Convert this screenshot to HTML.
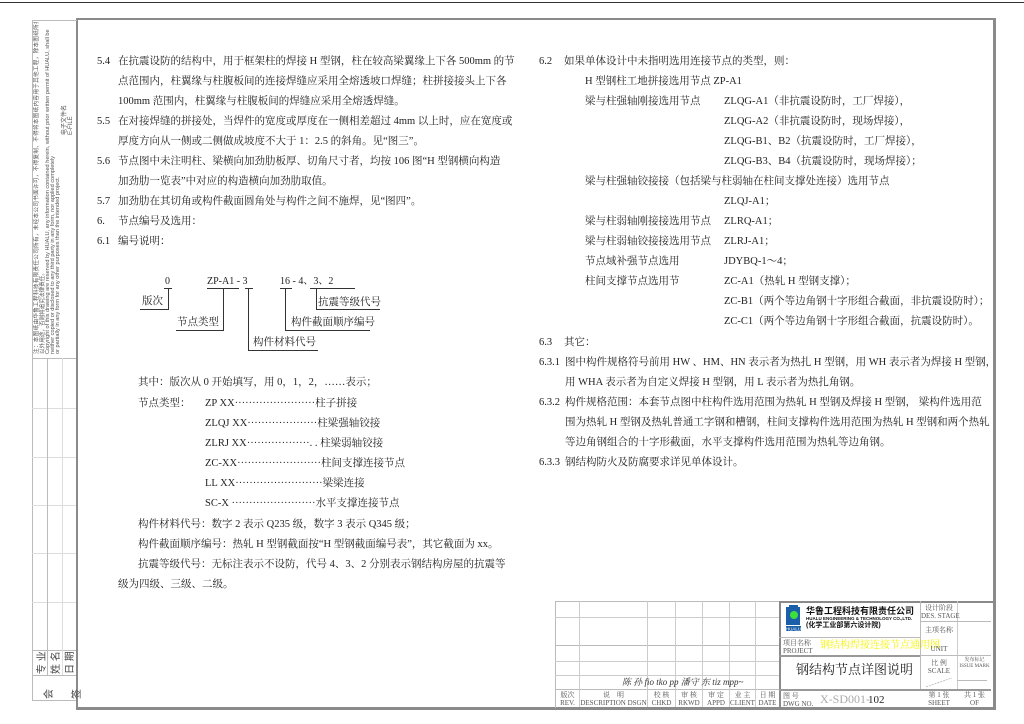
<!DOCTYPE html>
<html><head><meta charset="utf-8">
<style>
body{margin:0;width:1024px;height:724px;background:#fff;position:relative;overflow:hidden;font-family:"Liberation Serif","Noto Serif CJK SC","Noto Sans CJK SC",serif;color:#222}
.t{position:absolute;font-size:10.5px;line-height:12px;white-space:nowrap}
.l{position:absolute;background:#bbb}
.k{position:absolute;background:#333}
.s{position:absolute;font-size:7px;line-height:8px;white-space:nowrap;color:#555;text-align:center}
.r{position:absolute;transform-origin:0 0;transform:rotate(-90deg);font-size:5.6px;line-height:5.4px;white-space:nowrap;color:#555;font-family:"Liberation Sans","Noto Sans CJK SC",sans-serif}
</style></head><body>
<div class="k" style="left:0;top:2px;width:1024px;height:1px"></div>
<div style="position:absolute;left:76px;top:18px;width:915px;height:687px;border:2px solid #8a8a8a;border-right-width:3px;border-bottom-width:3px"></div>
<div style="position:absolute;left:32px;top:20px;width:44px;height:680px;border-left:1px solid #bbb;border-top:1px solid #bbb"></div>
<div class="l" style="left:32px;top:358px;width:44px;height:1px"></div>
<div class="l" style="left:32px;top:408px;width:44px;height:1px;background:#ddd"></div>
<div class="l" style="left:32px;top:457px;width:44px;height:1px;background:#ddd"></div>
<div class="l" style="left:32px;top:505px;width:44px;height:1px;background:#ddd"></div>
<div class="l" style="left:32px;top:553px;width:44px;height:1px;background:#ddd"></div>
<div class="l" style="left:32px;top:602px;width:44px;height:1px;background:#ddd"></div>
<div class="l" style="left:32px;top:650px;width:44px;height:1px"></div>
<div class="l" style="left:32px;top:675px;width:44px;height:1px"></div>
<div class="l" style="left:32px;top:700px;width:44px;height:1px"></div>
<div class="l" style="left:47px;top:358px;width:1px;height:317px"></div>
<div class="l" style="left:62px;top:358px;width:1px;height:317px;background:#ddd"></div>
<div style="position:absolute;left:33px;top:22px;width:43px;height:334px;overflow:hidden">
<div class="r" style="left:2px;top:332px;letter-spacing:0.3px">注：本图纸由华鲁工程科技有限责任公司所有，未经本公司书面许可，不得复制、不得将本图纸内容用于其他工程，除本图纸所指定的之外。</div>
<div class="r" style="left:8px;top:332px">以外用途，否则将追究法律责任。</div>
<div class="r" style="left:13px;top:332px">Copyright of this drawing are reserved by HUALU, any information contained herein, without prior written permit of HUALU, shall be</div>
<div class="r" style="left:18px;top:332px">neither copied or disclosed to any third party in any form, nor applied completely</div>
<div class="r" style="left:23px;top:332px">or partially in any form for any other purposes than the intended project.</div>
<div class="r" style="left:29px;top:113px;font-size:6px;line-height:6px">电子文件名<br>E-FILE</div>
</div>
<div class="r" style="left:36px;top:674px;font-size:10px;line-height:14px;color:#444">专 业<br>姓 名<br>日 期</div>
<div class="r" style="left:36px;top:699px;font-size:10px;line-height:28px;color:#444">会<br>签</div>

<div class="t" style="left:97px;top:56px">5.4</div><div class="t" style="left:118px;top:56px">在抗震设防的结构中，用于框架柱的焊接 H 型钢，柱在较高梁翼缘上下各 500mm 的节</div>
<div class="t" style="left:118px;top:76px">点范围内，柱翼缘与柱腹板间的连接焊缝应采用全熔透坡口焊缝；柱拼接接头上下各</div>
<div class="t" style="left:118px;top:96px">100mm 范围内，柱翼缘与柱腹板间的焊缝应采用全熔透焊缝。</div>
<div class="t" style="left:97px;top:116px">5.5</div><div class="t" style="left:118px;top:116px">在对接焊缝的拼接处，当焊件的宽度或厚度在一侧相差超过 4mm 以上时，应在宽度或</div>
<div class="t" style="left:118px;top:136px">厚度方向从一侧或二侧做成坡度不大于 1：2.5 的斜角。见“图三”。</div>
<div class="t" style="left:97px;top:156px">5.6</div><div class="t" style="left:118px;top:156px">节点图中未注明柱、梁横向加劲肋板厚、切角尺寸者，均按 106 图“H 型钢横向构造</div>
<div class="t" style="left:118px;top:176px">加劲肋一览表”中对应的构造横向加劲肋取值。</div>
<div class="t" style="left:97px;top:196px">5.7</div><div class="t" style="left:118px;top:196px">加劲肋在其切角或构件截面圆角处与构件之间不施焊，见“图四”。</div>
<div class="t" style="left:97px;top:216px">6.</div><div class="t" style="left:118px;top:216px">节点编号及选用：</div>
<div class="t" style="left:97px;top:236px">6.1</div><div class="t" style="left:118px;top:236px">编号说明：</div>

<div class="t" style="left:165px;top:276px;font-size:10px">0</div>
<div class="t" style="left:207px;top:276px;font-size:10px">ZP-A1 - 3</div>
<div class="t" style="left:280px;top:276px;font-size:10px">16 - 4、3、2</div>
<div class="k" style="left:164px;top:288px;width:8px;height:1px"></div>
<div class="k" style="left:207px;top:288px;width:32px;height:1px"></div>
<div class="k" style="left:245px;top:288px;width:8px;height:1px"></div>
<div class="k" style="left:280px;top:288px;width:12px;height:1px"></div>
<div class="k" style="left:310px;top:288px;width:45px;height:1px"></div>
<div class="t" style="left:142px;top:296px">版次</div>
<div class="k" style="left:140px;top:309px;width:29px;height:1px"></div><div class="k" style="left:168px;top:288px;width:1px;height:22px"></div>
<div class="t" style="left:177px;top:317px">节点类型</div>
<div class="k" style="left:176px;top:330px;width:48px;height:1px"></div><div class="k" style="left:223px;top:288px;width:1px;height:43px"></div>
<div class="t" style="left:253px;top:337px">构件材料代号</div>
<div class="k" style="left:248px;top:350px;width:70px;height:1px"></div><div class="k" style="left:248px;top:288px;width:1px;height:63px"></div>
<div class="t" style="left:291px;top:317px">构件截面顺序编号</div>
<div class="k" style="left:285px;top:330px;width:85px;height:1px"></div><div class="k" style="left:285px;top:288px;width:1px;height:43px"></div>
<div class="t" style="left:318px;top:297px">抗震等级代号</div>
<div class="k" style="left:316px;top:309px;width:64px;height:1px"></div><div class="k" style="left:316px;top:288px;width:1px;height:22px"></div>

<div class="t" style="left:138px;top:377px">其中：版次从 0 开始填写，用 0，1，2，……表示；</div>
<div class="t" style="left:138px;top:398px">节点类型：</div><div class="t" style="left:205px;top:398px">ZP XX·······················柱子拼接</div>
<div class="t" style="left:205px;top:418px">ZLQJ XX····················柱梁强轴铰接</div>
<div class="t" style="left:205px;top:438px">ZLRJ XX··················. . 柱梁弱轴铰接</div>
<div class="t" style="left:205px;top:458px">ZC-XX························柱间支撑连接节点</div>
<div class="t" style="left:205px;top:478px">LL XX·························梁梁连接</div>
<div class="t" style="left:205px;top:498px">SC-X ························水平支撑连接节点</div>
<div class="t" style="left:138px;top:519px">构件材料代号：数字 2 表示 Q235 级，数字 3 表示 Q345 级；</div>
<div class="t" style="left:138px;top:539px">构件截面顺序编号：热轧 H 型钢截面按“H 型钢截面编号表”，其它截面为 xx。</div>
<div class="t" style="left:138px;top:559px">抗震等级代号：无标注表示不设防，代号 4、3、2 分别表示钢结构房屋的抗震等</div>
<div class="t" style="left:118px;top:579px">级为四级、三级、二级。</div>

<div class="t" style="left:539px;top:56px">6.2</div><div class="t" style="left:564px;top:56px">如果单体设计中未指明选用连接节点的类型，则：</div>
<div class="t" style="left:585px;top:76px">H 型钢柱工地拼接选用节点 ZP-A1</div>
<div class="t" style="left:585px;top:96px">梁与柱强轴刚接选用节点</div><div class="t" style="left:724px;top:96px">ZLQG-A1（非抗震设防时，工厂焊接），</div>
<div class="t" style="left:724px;top:116px">ZLQG-A2（非抗震设防时，现场焊接），</div>
<div class="t" style="left:724px;top:136px">ZLQG-B1、B2（抗震设防时，工厂焊接），</div>
<div class="t" style="left:724px;top:156px">ZLQG-B3、B4（抗震设防时，现场焊接）；</div>
<div class="t" style="left:585px;top:176px">梁与柱强轴铰接接（包括梁与柱弱轴在柱间支撑处连接）选用节点</div>
<div class="t" style="left:724px;top:196px">ZLQJ-A1；</div>
<div class="t" style="left:585px;top:216px">梁与柱弱轴刚接接选用节点</div><div class="t" style="left:724px;top:216px">ZLRQ-A1；</div>
<div class="t" style="left:585px;top:236px">梁与柱弱轴铰接接选用节点</div><div class="t" style="left:724px;top:236px">ZLRJ-A1；</div>
<div class="t" style="left:585px;top:256px">节点域补强节点选用</div><div class="t" style="left:724px;top:256px">JDYBQ-1～4；</div>
<div class="t" style="left:585px;top:276px">柱间支撑节点选用节</div><div class="t" style="left:724px;top:276px">ZC-A1（热轧 H 型钢支撑）；</div>
<div class="t" style="left:724px;top:296px">ZC-B1（两个等边角钢十字形组合截面，非抗震设防时）；</div>
<div class="t" style="left:724px;top:316px">ZC-C1（两个等边角钢十字形组合截面，抗震设防时）。</div>
<div class="t" style="left:539px;top:337px">6.3</div><div class="t" style="left:564px;top:337px">其它：</div>
<div class="t" style="left:539px;top:357px">6.3.1</div><div class="t" style="left:565px;top:357px">图中构件规格符号前用 HW 、HM、HN 表示者为热扎 H 型钢，用 WH 表示者为焊接 H 型钢，</div>
<div class="t" style="left:565px;top:377px">用 WHA 表示者为自定义焊接 H 型钢，用 L 表示者为热扎角钢。</div>
<div class="t" style="left:539px;top:397px">6.3.2</div><div class="t" style="left:565px;top:397px">构件规格范围：本套节点图中柱构件选用范围为热轧 H 型钢及焊接 H 型钢，  梁构件选用范</div>
<div class="t" style="left:565px;top:417px">围为热轧 H 型钢及热轧普通工字钢和槽钢，柱间支撑构件选用范围为热轧 H 型钢和两个热轧</div>
<div class="t" style="left:565px;top:437px">等边角钢组合的十字形截面，水平支撑构件选用范围为热轧等边角钢。</div>
<div class="t" style="left:539px;top:457px">6.3.3</div><div class="t" style="left:565px;top:457px">钢结构防火及防腐要求详见单体设计。</div>

<div style="position:absolute;left:555px;top:601px;width:224px;height:106px;border-left:1px solid #bbb;border-top:1px solid #bbb"></div>
<div class="l" style="left:555px;top:617px;width:224px;height:1px;background:#ccc"></div>
<div class="l" style="left:555px;top:645px;width:224px;height:1px"></div>
<div class="l" style="left:555px;top:661px;width:224px;height:1px;background:#ccc"></div>
<div class="l" style="left:555px;top:675px;width:224px;height:1px;background:#ccc"></div>
<div class="l" style="left:555px;top:689px;width:224px;height:1px"></div>
<div class="l" style="left:579px;top:601px;width:1px;height:106px;background:#ccc"></div>
<div class="l" style="left:647px;top:601px;width:1px;height:106px;background:#ccc"></div>
<div class="l" style="left:675px;top:601px;width:1px;height:106px;background:#ccc"></div>
<div class="l" style="left:702px;top:601px;width:1px;height:106px;background:#ccc"></div>
<div class="l" style="left:729px;top:601px;width:1px;height:106px;background:#ccc"></div>
<div class="l" style="left:755px;top:601px;width:1px;height:106px;background:#ccc"></div>
<div class="t" style="left:622px;top:676px;font-size:9px;color:#333;font-style:italic">陈 孙 fio tko pp 潘守 东 tiz   mpp~</div>
<div class="s" style="left:556px;top:691px;width:23px">版次<br>REV.</div>
<div class="s" style="left:580px;top:691px;width:67px">说　明<br>DESCRIPTION DSGN</div>
<div class="s" style="left:648px;top:691px;width:27px">校 核<br>CHKD</div>
<div class="s" style="left:676px;top:691px;width:26px">审 核<br>RKWD</div>
<div class="s" style="left:703px;top:691px;width:26px">审 定<br>APPD</div>
<div class="s" style="left:730px;top:691px;width:25px">业 主<br>CLIENT</div>
<div class="s" style="left:756px;top:691px;width:23px">日 期<br>DATE</div>

<div style="position:absolute;left:779px;top:601px;width:212px;height:105px;border-left:2px solid #8a8a8a;border-top:2px solid #8a8a8a"></div>
<div class="l" style="left:779px;top:637px;width:141px;height:1px"></div>
<div class="l" style="left:779px;top:655px;width:141px;height:2px;background:#999"></div>
<div class="l" style="left:779px;top:689px;width:212px;height:2px;background:#999"></div>
<div class="l" style="left:920px;top:601px;width:1px;height:88px"></div>
<div class="l" style="left:957px;top:601px;width:1px;height:88px;background:#ccc"></div>
<div class="l" style="left:920px;top:621px;width:71px;height:1px"></div>
<div class="l" style="left:920px;top:655px;width:71px;height:1px"></div>
<div class="l" style="left:957px;top:680px;width:30px;height:1px"></div>
<svg style="position:absolute;left:786px;top:605px" width="15" height="28"><rect x="0" y="2" width="14" height="18" fill="#1b5fa8"/><rect x="3" y="0" width="9" height="3" fill="#1b5fa8"/><circle cx="8" cy="10" r="4" fill="#3ee03e"/><rect x="0" y="21" width="15" height="5" fill="#1b5fa8"/><text x="7.5" y="25.5" font-size="4.5" fill="#fff" text-anchor="middle" font-family="Liberation Sans">HUALU</text></svg>
<div class="t" style="left:806px;top:606px;font-size:9px;line-height:10px;font-weight:bold;color:#111;font-family:'Liberation Sans','Noto Sans CJK SC',sans-serif">华鲁工程科技有限责任公司</div>
<div class="t" style="left:806px;top:616px;font-size:4.5px;line-height:5px;font-weight:bold;color:#111;font-family:'Liberation Sans',sans-serif">HUALU ENGINEERING &amp; TECHNOLOGY CO.,LTD.</div>
<div class="t" style="left:806px;top:621px;font-size:7px;line-height:9px;font-weight:bold;color:#111;font-family:'Liberation Sans','Noto Sans CJK SC',sans-serif">(化学工业部第六设计院)</div>
<div class="s" style="left:780px;top:639px;width:32px;text-align:left;padding-left:3px">项目名称<br>PROJECT</div>
<div class="t" style="left:820px;top:640px;font-size:10px;color:#f5f500">钢结构焊接连接节点通用图</div>
<div class="t" style="left:796px;top:662px;font-size:13px;line-height:16px;color:#222">钢结构节点详图说明</div>
<div class="s" style="left:921px;top:604px;width:36px">设计阶段<br>DES. STAGE</div>
<div class="s" style="left:921px;top:626px;width:36px">主项名称</div>
<div class="s" style="left:921px;top:645px;width:36px">UNIT</div>
<div class="s" style="left:921px;top:659px;width:36px">比 例<br>SCALE</div>
<svg style="position:absolute;left:925px;top:676px" width="28" height="12"><line x1="1" y1="11" x2="27" y2="2" stroke="#999" stroke-width="0.6" stroke-dasharray="2,1"/></svg>
<div class="s" style="left:958px;top:658px;width:33px;font-size:5px;line-height:6px">发布标记<br>ISSUE MARK</div>
<div class="s" style="left:780px;top:692px;width:32px;text-align:left;padding-left:3px">图 号<br>DWG NO.</div>
<div class="t" style="left:820px;top:693px;font-size:12px;color:#aaa">X-SD001-</div>
<div class="t" style="left:868px;top:694px;font-size:11px;color:#222">102</div>
<div class="s" style="left:921px;top:691px;width:36px">第 1 张<br>SHEET</div>
<div class="s" style="left:958px;top:691px;width:33px">共 1 张<br>OF</div>
</body></html>
